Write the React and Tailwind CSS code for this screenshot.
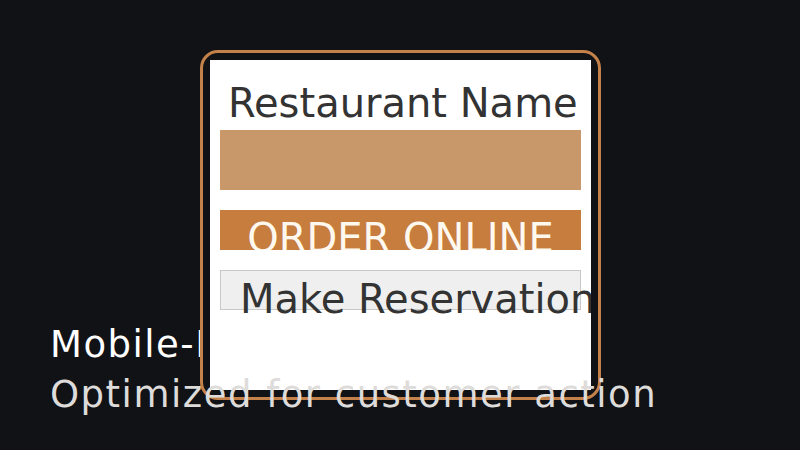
import React from 'react';

const App = () => {
  return (
    <div
      className="relative w-[800px] h-[450px] overflow-hidden bg-[#111216] flex flex-col justify-end pl-[50px] pb-[30px]"
      style={{ fontFamily: '"DejaVu Sans", Verdana, sans-serif' }}
    >
      {/* Caption (title sits behind the phone, subtitle over it) */}
      <div className="text-[37px] leading-[50px] tracking-[1.5px] text-white whitespace-nowrap">Mobile-First Design</div>
      <div className="relative z-10 text-[37px] leading-[50px] tracking-[1.5px] text-[#dedcda] whitespace-nowrap">
        Optimized for customer action
      </div>

      {/* Phone mockup */}
      <div className="absolute left-[200px] top-[50px] w-[401px] h-[350px] border-[3px] border-[#c4824a] rounded-[18px] bg-[#111216] p-[7px]">
        <div className="w-full h-full bg-white overflow-hidden px-[10px] pt-[19px] text-[#333333]">
          <div className="h-[48px] leading-[48px] text-[40px] pl-2 whitespace-nowrap">Restaurant Name</div>

          <div className="mt-[3px] h-[60px] bg-[#c8976a]" />

          <div className="mt-[20px] h-[40px] bg-[#c67d3d] pt-[5px] text-center text-[40px] leading-[46px] text-[#fff8ef] whitespace-nowrap overflow-hidden">
            ORDER ONLINE
          </div>

          <div className="mt-[20px] h-[40px] bg-[#efefef] border border-[#c8c8c8] pt-[5px] pl-[19px] text-left text-[40px] leading-[46px] whitespace-nowrap">
            Make Reservation
          </div>
        </div>
      </div>
    </div>
  );
};

export default App;
